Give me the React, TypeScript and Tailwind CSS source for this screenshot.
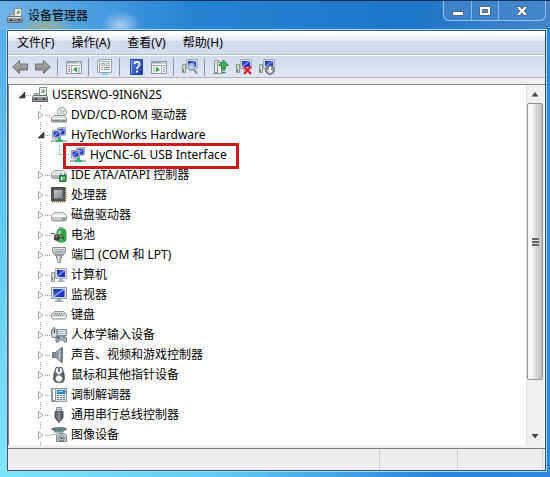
import React, { useState } from "react";

type IconProps = { className?: string };
type IconType = (props: IconProps) => React.ReactElement;

type TreeEntry = {
  id: string;
  label: string;
  icon: IconType;
  highlighted?: boolean;
  children?: TreeEntry[];
};

/* ============================== Icon base ============================== */
function Glyph({ className, children }: IconProps & { children: React.ReactNode }) {
  return (
    <svg viewBox="0 0 16 16" className={className ?? "size-4 shrink-0"} aria-hidden>
      {children}
    </svg>
  );
}

/** Shared gradients, mounted once */
function IconDefs() {
  return (
    <svg className="absolute size-0" aria-hidden>
      <defs>
        <linearGradient id="metal" x1="0" y1="0" x2="0" y2="1">
          <stop offset="0" stopColor="#f2f4f4" />
          <stop offset="1" stopColor="#9aa0a3" />
        </linearGradient>
        <linearGradient id="dark" x1="0" y1="0" x2="1" y2="0">
          <stop offset="0" stopColor="#4a4f53" />
          <stop offset="0.5" stopColor="#8b9297" />
          <stop offset="1" stopColor="#3c4043" />
        </linearGradient>
        <linearGradient id="screen" x1="0" y1="0" x2="1" y2="1">
          <stop offset="0" stopColor="#141f86" />
          <stop offset="0.4" stopColor="#3c55d6" />
          <stop offset="0.5" stopColor="#93a8f4" />
          <stop offset="0.6" stopColor="#2038cc" />
          <stop offset="1" stopColor="#1a2db4" />
        </linearGradient>
        <linearGradient id="arrow" x1="0" y1="0" x2="0" y2="1">
          <stop offset="0" stopColor="#b4b4b4" />
          <stop offset="1" stopColor="#808080" />
        </linearGradient>
        <linearGradient id="help" x1="0" y1="0" x2="1" y2="1">
          <stop offset="0" stopColor="#5d83e6" />
          <stop offset="1" stopColor="#1a3c9c" />
        </linearGradient>
        <linearGradient id="die" x1="0" y1="0" x2="1" y2="1">
          <stop offset="0" stopColor="#c6c8c9" />
          <stop offset="1" stopColor="#7e8183" />
        </linearGradient>
      </defs>
    </svg>
  );
}

/* ============================== Device icons ============================== */
const RootIcon: IconType = (p) => (
  <Glyph {...p}>
    <path d="M7.5.5h7v8h-7z" fill="#e9efe6" stroke="#848b8c" />
    <path d="M9.5 6l1.5-4 2 1.5L12 6z" fill="#6aa06b" />
    <path d="M2.500 6.500h5v3h-5z" fill="#c6cbcd" stroke="#8b9194" />
    <path d="M1.5 8.500h13l1 2v4H.5v-4z" fill="#8c979d" stroke="#626a6f" />
    <path d="M1.500 9.500h13" stroke="#dfe4e6" />
    <path d="M1 12.500h14" stroke="#6b757b" />
    <path d="M3 11h2v2H3zM11 11h2v2h-2z" fill="#3f474c" />
  </Glyph>
);

const DiscDriveIcon: IconType = (p) => (
  <Glyph {...p}>
    <circle cx="11" cy="5" r="4.5" fill="#e8eeea" stroke="#98a29c" />
    <path d="M11 5L8 1.5M11 5l3 3M11 5l3.5-2" stroke="#8db596" />
    <circle cx="11" cy="5" r="1.3" fill="#fff" stroke="#888" strokeWidth=".6" />
    <path d="M3 8.5h10l2.5 2.5v4H.5v-4z" fill="url(#metal)" stroke="#8a9093" />
    <path d="M1 11.5h14" stroke="#fafafa" />
    <path d="M11 13h3v1h-3z" fill="#489b4c" />
    <path d="M2 13.5h7" stroke="#7b8184" />
  </Glyph>
);

const NetworkIcon: IconType = (p) => (
  <Glyph {...p}>
    <path d="M6.500 1l8-.5v7.500l-8 .8z" fill="#d7dde6" stroke="#98a1af" />
    <path d="M7.500 2l6-.4v5.600l-6 .6z" fill="url(#screen)" />
    <path d="M1.500 3.500l8-.5v7.500l-8 .8z" fill="#e5e9ee" stroke="#98a1af" />
    <path d="M2.500 4.500l6-.4v5.400l-6 .6z" fill="url(#screen)" />
    <path d="M4 11.500h4v1H3z" fill="#8a939c" />
    <path d="M7 10.500h3v3H7z" fill="#36ad78" />
    <path d="M0 14h16" stroke="#9aaba6" strokeWidth="1.6" />
    <path d="M5 12.800h7v2.400H5z" fill="#35b07a" />
  </Glyph>
);

const IdeIcon: IconType = (p) => (
  <Glyph {...p}>
    <path d="M3.500 3.500h9l3 3v4l-1 1h-13l-1-1v-4z" fill="url(#metal)" stroke="#a0a5a8" />
    <path d="M1 7h14" stroke="#fbfbfb" />
    <path d="M8.500 8.500h6.500v6H8.500z" fill="#3d9b5d" stroke="#2b7846" />
    <path d="M10 8.500v-2M13.500 8.500v-2" stroke="#2b6b40" />
    <path d="M10 10h1.500v3H10zM12.500 10h1v2h-1z" fill="#c6efce" />
  </Glyph>
);

const CpuIcon: IconType = (p) => (
  <Glyph {...p}>
    <path d="M15 1v14M1 15h14" stroke="#c9b26a" strokeWidth="2" strokeDasharray="1 1" />
    <path d="M.5.5h13.500v13.500H.5z" fill="#55585a" stroke="#46494b" />
    <path d="M3 3h8.500v8.500H3z" fill="url(#die)" />
  </Glyph>
);

const DiskIcon: IconType = (p) => (
  <Glyph {...p}>
    <path d="M3.500 5.500h9l3 3v4.500l-1 1h-13l-1-1V8.500z" fill="url(#metal)" stroke="#a0a5a8" />
    <path d="M1 9h14" stroke="#fbfbfb" strokeWidth="2" />
    <path d="M2 12h8" stroke="#e3e5e6" />
    <path d="M12 10.500h2v2.500h-2z" fill="#58b34c" />
  </Glyph>
);

const BatteryIcon: IconType = (p) => (
  <Glyph {...p}>
    <path d="M8 .5h4v2H8z" fill="#c6ccc6" stroke="#808980" strokeWidth=".6" />
    <rect x="6" y="2" width="9" height="13" rx="3" fill="#3fb556" stroke="#3d8048" />
    <path d="M8.500 4v8" stroke="#b5ecbb" strokeWidth="2" />
    <path d="M12.500 4v9" stroke="#2d8e42" strokeWidth="1.500" />
    <path d="M0 6.500h2.500c2 0 1.500 2 3 2.500" fill="none" stroke="#555" strokeWidth="1.200" />
    <path d="M3 9l4-2 3 4-3.500 3L3 13z" fill="#45443c" />
    <path d="M8 8.500l3-1.500M10 11l3-1.500" stroke="#3b3931" strokeWidth="1.200" />
    <path d="M4.500 10l2.500-1" stroke="#bda965" />
  </Glyph>
);

const PortIcon: IconType = (p) => (
  <Glyph {...p}>
    <path d="M1.500.5h13v4l-2.500 4H4l-2.500-4z" fill="url(#metal)" stroke="#858c8f" />
    <path d="M3.500 2.500h9M4.500 4.500h7" stroke="#666d70" strokeDasharray="1 1" />
    <path d="M5.500 8.500h5v3l-1 1v3h-3v-3l-1-1z" fill="#aeb4b7" stroke="#858c8f" />
    <path d="M7.500 9v6" stroke="#f2f2f2" />
  </Glyph>
);

const ComputerIcon: IconType = (p) => (
  <Glyph {...p}>
    <path d="M.5 5.500h3v9h-3z" fill="#d7dbd6" stroke="#929a96" />
    <path d="M1.500 10v3" stroke="#589552" />
    <path d="M4.500 1.500h11v10h-11z" fill="#dbe0e8" stroke="#a4abb6" />
    <path d="M6 3h8v7H6z" fill="url(#screen)" />
    <path d="M8.500 12h3v1.500h2V15h-7v-1.500h2z" fill="#a5aeb8" />
  </Glyph>
);

const MonitorIcon: IconType = (p) => (
  <Glyph {...p}>
    <path d="M.5.5h15v11H.5z" fill="#d9dee6" stroke="#9299a4" />
    <path d="M2.500 2h11v8h-11z" fill="url(#screen)" />
    <path d="M6 12h4v1.500h2.500V15h-9v-1.500H6z" fill="#a3abb4" />
  </Glyph>
);

const KeyboardIcon: IconType = (p) => (
  <Glyph {...p}>
    <path d="M3.500 4.500h9l3 3.500v2.500L14 12H2L.5 10.500V8z" fill="#dadcdd" stroke="#94999c" />
    <path d="M4 6.500h8M3 8.500h10" stroke="#7c8184" strokeDasharray="1 1" />
    <path d="M2.500 7.500h11" stroke="#8d9295" strokeDasharray="1 1" />
    <path d="M1 10.500h14" stroke="#fafafa" />
  </Glyph>
);

const HidIcon: IconType = (p) => (
  <Glyph {...p}>
    <path d="M3 2.500V0" stroke="#555" />
    <rect x=".6" y="2" width="5.400" height="8.500" rx="2" fill="#d5d9da" stroke="#6d7376" />
    <path d="M3.300 3v3" stroke="#333" />
    <path d="M6.500 2.500h9v6h-9z" fill="#e3eaf0" stroke="#7b8c9b" />
    <path d="M7.500 4.500h7M7.500 6.500h7" stroke="#5a86a8" strokeDasharray="1 1" />
    <path d="M5 11l2-2h6.500l2 2v4h-2L12 13H9l-1.500 2H5z" fill="#aab4bc" stroke="#6d7881" />
    <path d="M7.500 10v2M6.500 11h2M12.500 10.500h1" stroke="#32393f" />
  </Glyph>
);

const SpeakerIcon: IconType = (p) => (
  <Glyph {...p}>
    <path d="M1.500 5.500h3v5h-3z" fill="#7f898f" stroke="#6a7379" />
    <path d="M4.500 5.500l6-5h1v15h-1l-6-5z" fill="#8d989f" stroke="#7d868b" />
    <path d="M8.500 3.500v9" stroke="#c2c9cd" strokeWidth="1.500" />
    <path d="M11 1v14" stroke="#626b70" />
  </Glyph>
);

const MouseIcon: IconType = (p) => (
  <Glyph {...p}>
    <path d="M5 .5h6l2 6 .5 6-2 3h-7l-2-3 .5-6z" fill="url(#dark)" stroke="#63696c" />
    <path d="M5.500 1h5l1 4L8 7.500 4.500 5z" fill="#eceeef" />
    <path d="M4.500 11.500C5 7.500 11 7.500 11.500 11.500l-1.500 3H6z" fill="#f3f4f4" />
    <path d="M8 1v4" stroke="#444" strokeWidth="1.300" />
  </Glyph>
);

const ModemIcon: IconType = (p) => (
  <Glyph {...p}>
    <path d="M.5 1.500h15v13H.5z" fill="#dde4e8" stroke="#8a959c" />
    <path d="M1.500 1.500h3v12h-3z" fill="#f4f6f7" stroke="#8a959c" />
    <path d="M6 3h8.500v4H6z" fill="#2b86bd" />
    <path d="M7 4.500h5" stroke="#9fd3ef" />
    <path d="M6 8.500h9M6 10.500h9M6 12.500h9" stroke="#6b808c" strokeDasharray="2 1" />
  </Glyph>
);

const UsbIcon: IconType = (p) => (
  <Glyph {...p}>
    <path d="M5.500.5h5v4h-5z" fill="#d3d7d9" stroke="#8b9195" />
    <path d="M6.500 2h1v1h-1zM8.500 2h1v1h-1z" fill="#666" />
    <path d="M4 4.500h8v6l-2 3H6l-2-3z" fill="url(#dark)" stroke="#53585b" />
    <path d="M7 13.500h2V16H7z" fill="#6d7376" />
  </Glyph>
);

const CameraIcon: IconType = (p) => (
  <Glyph {...p}>
    <path d="M0 2l4-1.500h9L16 2l-4 2.500H4z" fill="#667d80" stroke="#586c70" strokeWidth=".6" />
    <path d="M2 5h11l-2 1.500H5z" fill="#b4c0c2" />
    <path d="M5.500 8.500l2-2h6l2 2v6h-10z" fill="#c9cfd2" stroke="#7d8588" />
    <path d="M.5 7.500h6" stroke="#a9b1b3" />
    <circle cx="10.500" cy="11.300" r="2.700" fill="#f2f4f5" stroke="#566" />
    <circle cx="10.500" cy="11.300" r="1.200" fill="#33465a" />
  </Glyph>
);

/* ============================== Toolbar icons ============================== */
const BackIcon: IconType = (p) => (
  <Glyph {...p}>
    <path d="M.7 8L7.500 1.500v3.500h8v6h-8v3.500z" fill="url(#arrow)" stroke="#6c6c6c" strokeLinejoin="round" />
  </Glyph>
);

const ForwardIcon: IconType = (p) => (
  <Glyph {...p}>
    <path d="M15.300 8L8.500 1.500v3.500h-8v6h8v3.500z" fill="url(#arrow)" stroke="#6c6c6c" strokeLinejoin="round" />
  </Glyph>
);

const ConsoleTreeIcon: IconType = (p) => (
  <Glyph {...p}>
    <path d="M.5 2.500h15v12H.5z" fill="#f6f8fa" stroke="#8e959d" />
    <path d="M1 3.500h14" stroke="#99a5b3" strokeWidth="2" />
    <path d="M11 3.500h3" stroke="#fff" strokeDasharray="1 1" />
    <path d="M1 6.500h14M5.500 6.500v8" stroke="#a8b0b8" />
    <path d="M2 8.500h2M2 10.500h2M2 12.500h2M13 8v6" stroke="#8d98a3" />
    <path d="M10.800 7.700v5.600L7 10.500z" fill="#35a13d" />
  </Glyph>
);

const PropertiesIcon: IconType = (p) => (
  <Glyph {...p}>
    <path d="M.5 1.500h12v12H.5z" fill="#f2f5f8" stroke="#a6adb4" />
    <path d="M2.500.5h12v13h-12z" fill="#f8fafb" stroke="#9ba2a9" />
    <path d="M4 2.500h9" stroke="#9eabb8" />
    <path d="M4.500 4.500h3v2h-3zM9.500 4.500h3v2h-3z" fill="#fff" stroke="#9aa2a9" />
    <path d="M4 8.500h2M7 8.500h6M4 10.500h2M7 10.500h6" stroke="#8b959f" />
    <path d="M5 14h6v2H5z" fill="#83d2e4" />
  </Glyph>
);

const HelpIcon: IconType = (p) => (
  <Glyph {...p}>
    <path d="M2.500.5h12v15h-12z" fill="url(#help)" stroke="#27469a" />
    <path d="M3.500 1v14" stroke="#8ca7ee" />
    <path d="M6.500 5c.3-3 5-2.500 5 .2C11.500 7.300 9 7.300 9 10" fill="none" stroke="#fff" strokeWidth="1.700" />
    <path d="M8 11.500h2v2H8z" fill="#fff" />
  </Glyph>
);

const ActionPaneIcon: IconType = (p) => (
  <Glyph {...p}>
    <path d="M.5 2.500h15v12H.5z" fill="#f6f8fa" stroke="#8e959d" />
    <path d="M1 3.500h14" stroke="#99a5b3" strokeWidth="2" />
    <path d="M11 3.500h3" stroke="#fff" strokeDasharray="1 1" />
    <path d="M1 6.500h14M10.500 6.500v8M3 7v7" stroke="#a8b0b8" />
    <path d="M12 8.500h2M12 10.500h2M12 12.500h2" stroke="#8d98a3" />
    <path d="M5 7.700v5.600l3.800-2.800z" fill="#35a13d" />
  </Glyph>
);

function SmallComputer() {
  return (
    <>
      <path d="M.5 5.500h3v8h-3z" fill="#d8ddd8" stroke="#8b938e" />
      <path d="M1.500 10v3" stroke="#579260" />
      <path d="M4.500.5h11v9h-11z" fill="#d9dfe9" stroke="#a3abb9" />
      <path d="M6 2h8v6H6z" fill="url(#screen)" />
      <path d="M7 10h4v2H7z" fill="#a5adb8" />
    </>
  );
}

const ScanIcon: IconType = (p) => (
  <Glyph {...p}>
    <SmallComputer />
    <circle cx="9.500" cy="7.500" r="3.300" fill="#bed6f4" fillOpacity=".85" stroke="#8d9cb4" />
    <path d="M12 10.500l3 4" stroke="#858b94" strokeWidth="2" />
  </Glyph>
);

const UpdateIcon: IconType = (p) => (
  <Glyph {...p}>
    <path d="M1.500 1.500h4v12h-4z" fill="#e4eae6" stroke="#8b948f" />
    <path d="M4.500 3.500h4v11h-4z" fill="#eef2ef" stroke="#8b948f" />
    <path d="M0 14.500h9" stroke="#8b948f" />
    <path d="M10.500 1l5 5.500h-3v3h-4v-3h-3z" fill="#43ad5c" stroke="#237b38" strokeWidth=".8" />
    <path d="M8.500 11h4M8.500 13.500h4" stroke="#358e4c" strokeWidth="1.300" />
  </Glyph>
);

const UninstallIcon: IconType = (p) => (
  <Glyph {...p}>
    <SmallComputer />
    <path d="M8 7.500l7 7.500M15 7.500L8 15" stroke="#d3222a" strokeWidth="2.200" />
  </Glyph>
);

const DisableIcon: IconType = (p) => (
  <Glyph {...p}>
    <SmallComputer />
    <circle cx="11" cy="11" r="4.500" fill="#8b8f92" stroke="#777b7e" />
    <path d="M10 8h2v3h2l-3 3.500L8 11h2z" fill="#fff" />
  </Glyph>
);

/* ============================== Data ============================== */
const menus = ["文件(F)", "操作(A)", "查看(V)", "帮助(H)"];

const toolbarGroups: { label: string; icon: IconType }[][] = [
  [
    { label: "后退", icon: BackIcon },
    { label: "前进", icon: ForwardIcon },
  ],
  [{ label: "显示/隐藏控制台树", icon: ConsoleTreeIcon }],
  [{ label: "属性", icon: PropertiesIcon }],
  [
    { label: "帮助", icon: HelpIcon },
    { label: "显示/隐藏操作窗格", icon: ActionPaneIcon },
  ],
  [{ label: "扫描检测硬件改动", icon: ScanIcon }],
  [
    { label: "更新驱动程序", icon: UpdateIcon },
    { label: "卸载", icon: UninstallIcon },
    { label: "禁用", icon: DisableIcon },
  ],
];

const categories: TreeEntry[] = [
  { id: "dvd", label: "DVD/CD-ROM 驱动器", icon: DiscDriveIcon },
  {
    id: "hytech",
    label: "HyTechWorks Hardware",
    icon: NetworkIcon,
    children: [{ id: "hycnc", label: "HyCNC-6L USB Interface", icon: NetworkIcon, highlighted: true }],
  },
  { id: "ide", label: "IDE ATA/ATAPI 控制器", icon: IdeIcon },
  { id: "cpu", label: "处理器", icon: CpuIcon },
  { id: "disk", label: "磁盘驱动器", icon: DiskIcon },
  { id: "battery", label: "电池", icon: BatteryIcon },
  { id: "ports", label: "端口 (COM 和 LPT)", icon: PortIcon },
  { id: "computer", label: "计算机", icon: ComputerIcon },
  { id: "monitor", label: "监视器", icon: MonitorIcon },
  { id: "keyboard", label: "键盘", icon: KeyboardIcon },
  { id: "hid", label: "人体学输入设备", icon: HidIcon },
  { id: "sound", label: "声音、视频和游戏控制器", icon: SpeakerIcon },
  { id: "mouse", label: "鼠标和其他指针设备", icon: MouseIcon },
  { id: "modem", label: "调制解调器", icon: ModemIcon },
  { id: "usb", label: "通用串行总线控制器", icon: UsbIcon },
  { id: "imaging", label: "图像设备", icon: CameraIcon },
];

/* ============================== Tree ============================== */
function Expander({ open, label, onClick }: { open: boolean; label: string; onClick: () => void }) {
  return (
    <button
      type="button"
      aria-label={label}
      aria-expanded={open}
      onClick={onClick}
      className="grid h-3 w-[9px] shrink-0 place-items-center bg-white"
    >
      <svg viewBox="0 0 8 10" className="h-[10px] w-2" aria-hidden>
        {open ? (
          <path d="M7 2v6H1z" fill="#404040" stroke="#262626" strokeWidth=".6" />
        ) : (
          <path d="M1.500 1.500L6 5 1.500 8.500z" fill="#fff" stroke="#a6a6a6" />
        )}
      </svg>
    </button>
  );
}

function Category({ entry }: { entry: TreeEntry }) {
  const [open, setOpen] = useState(true);
  const isOpen = !!entry.children && open;
  const Icon = entry.icon;

  return (
    <li role="treeitem">
      <div className="flex h-5 items-center">
        <Expander open={isOpen} label={entry.label} onClick={() => setOpen((o) => !o)} />
        <span className="mr-px w-[5px] border-t border-dotted border-[#9a9a9a]" />
        <Icon />
        <span className="ml-1 whitespace-nowrap">{entry.label}</span>
      </div>
      {isOpen && (
        <ul role="group" className="pl-[23px]">
          {entry.children!.map((child) => (
            <li key={child.id} role="treeitem" className="relative flex h-5 w-fit items-center">
              <span className="mr-px h-[10px] w-[10px] self-start border-b border-l border-dotted border-[#9a9a9a]" />
              <child.icon />
              <span className="ml-1 whitespace-nowrap">{child.label}</span>
              {child.highlighted && (
                <span className="pointer-events-none absolute -top-[2px] -right-3 -bottom-1 left-1 border-3 border-[#cc1a1f]" />
              )}
            </li>
          ))}
        </ul>
      )}
    </li>
  );
}

function DeviceTree() {
  const [open, setOpen] = useState(true);

  return (
    <ul role="tree" aria-label="设备" className="min-w-0 flex-1 overflow-hidden bg-white pl-2">
      <li role="treeitem">
        <div className="flex h-5 items-center">
          <Expander open={open} label="USERSWO-9IN6N2S" onClick={() => setOpen((o) => !o)} />
          <span className="mr-px w-[5px] border-t border-dotted border-[#9a9a9a]" />
          <RootIcon />
          <span className="ml-1 whitespace-nowrap">USERSWO-9IN6N2S</span>
        </div>
        {open && (
          <div className="grid pl-[19px]">
            {/* vertical guide, behind the expanders */}
            <span className="col-start-1 row-start-1 ml-1 w-0 border-l border-dotted border-[#9a9a9a]" />
            <ul role="group" className="relative col-start-1 row-start-1">
              {categories.map((entry) => (
                <Category key={entry.id} entry={entry} />
              ))}
            </ul>
          </div>
        )}
      </li>
    </ul>
  );
}

function Scrollbar() {
  return (
    <div className="flex w-[17px] shrink-0 flex-col border-l border-[#e3e3e3] bg-[#f0f0f0]">
      <button type="button" aria-label="向上滚动" className="grid h-[18px] place-items-center">
        <svg viewBox="0 0 8 5" className="h-[5px] w-2" aria-hidden>
          <path d="M4 0l3.500 4.500h-7z" fill="#454545" />
        </svg>
      </button>
      <div className="flex flex-1 flex-col">
        <div className="grid flex-[278] place-items-center rounded-xs border border-[#929292] bg-linear-to-r from-[#f6f6f6] from-30% via-[#d6d6d8] via-60% to-[#bfc0c4]">
          <div className="flex flex-col gap-px">
            <span className="h-[2px] w-[7px] bg-[#666]" />
            <span className="h-[2px] w-[7px] bg-[#666]" />
            <span className="h-[2px] w-[7px] bg-[#666]" />
          </div>
        </div>
        <div className="flex-[47]" />
      </div>
      <button type="button" aria-label="向下滚动" className="grid h-[18px] place-items-center">
        <svg viewBox="0 0 8 5" className="h-[5px] w-2" aria-hidden>
          <path d="M4 4.500L7.500 0h-7z" fill="#454545" />
        </svg>
      </button>
    </div>
  );
}

/* ============================== Window chrome ============================== */
function TitleBar() {
  return (
    <header className="flex h-7 items-start justify-between bg-[radial-gradient(ellipse_28px_14px_at_46px_28px,#9db48f,transparent),radial-gradient(ellipse_20px_14px_at_121px_24px,#a9cdf2,transparent),linear-gradient(to_right,#6fb4e6,#2683d4_35%,#1f75c9_75%,#4483c8)] pr-1 pl-[7px]">
      <div className="flex h-full items-center gap-[5px] pt-[2px]">
        <RootIcon />
        <h1>设备管理器</h1>
      </div>
      <div className="flex h-5 divide-x divide-[#8db9e6] rounded-b-md border border-t-0 border-[#9cc3ea] bg-[#4586c9]/70">
        <button type="button" aria-label="最小化" className="grid w-7 place-items-center">
          <svg viewBox="0 0 12 12" className="size-3" aria-hidden>
            <path d="M.5 6.500h11v4H.5z" fill="#fff" stroke="#4d6685" />
          </svg>
        </button>
        <button type="button" aria-label="最大化" className="grid w-[27px] place-items-center">
          <svg viewBox="0 0 12 10" className="h-[10px] w-3" aria-hidden>
            <path d="M.5.5h11v9H.5z" fill="#fff" stroke="#4d6685" />
            <path d="M3.500 3.500h5v3h-5z" fill="#5b8fc8" stroke="#4d6685" />
          </svg>
        </button>
        <button type="button" aria-label="关闭" className="grid w-[46px] place-items-center">
          <svg viewBox="0 0 12 10" className="h-[10px] w-3" aria-hidden>
            <path
              d="M1 .5h3L6 3 8 .5h3v1L8.300 5 11 8.500v1H8L6 7 4 9.500H1v-1L3.700 5 1 1.500z"
              fill="#fff"
              stroke="#4d6685"
            />
          </svg>
        </button>
      </div>
    </header>
  );
}

function MenuBar() {
  return (
    <nav className="flex h-6 items-center gap-[17px] border-b border-[#b3b9c9] bg-linear-to-b from-white from-10% via-[#e3e8f3] via-40% to-[#d3daec] to-45% pl-[9px]">
      {menus.map((m) => (
        <button key={m} type="button" className="whitespace-nowrap">
          {m}
        </button>
      ))}
    </nav>
  );
}

function Toolbar() {
  return (
    <div
      role="toolbar"
      aria-label="工具栏"
      className="flex h-[23px] items-center divide-x divide-[#8b93a3] border-t border-b border-t-white border-b-[#b0b5c0] bg-linear-to-b from-[#d3daec] to-[#e1e7f5] pl-1"
    >
      {toolbarGroups.map((group, i) => (
        <div key={i} className="flex h-[18px] items-center gap-[7px] pr-[6px] pl-2 first:pl-0">
          {group.map(({ label, icon: Icon }) => (
            <button key={label} type="button" title={label} aria-label={label}>
              <Icon />
            </button>
          ))}
        </div>
      ))}
    </div>
  );
}

function StatusBar() {
  return (
    <footer className="flex h-[22px] border-t border-[#7d7d7d] bg-[#f0eded] py-px pr-[2px]">
      <span className="flex-1 border-r border-[#cfcccc]" />
      <span className="w-[78px] border-r border-[#cfcccc]" />
      <span className="w-[85px] border-r border-[#cfcccc]" />
    </footer>
  );
}

export default function App() {
  return (
    <div className="flex min-h-screen flex-col border-t border-[#12315c] font-['Noto_Sans','Noto_Sans_CJK_SC',sans-serif] text-xs text-black">
      <IconDefs />
      <TitleBar />
      <div className="flex flex-1 flex-col bg-[radial-gradient(ellipse_80%_110%_at_0%_100%,#7ce6f8,#5fcdf3_50%,transparent),linear-gradient(to_right,#55a5e2,#2a7fd0_50%,#2c88de)] pr-[3px] pb-[5px] pl-[6px]">
        <main className="flex flex-1 flex-col border border-[#a9dcf4]">
          <div className="flex flex-1 flex-col border border-[#2d5675] bg-[#f0f0f0]">
            <MenuBar />
            <Toolbar />
            <section className="mt-[6px] mb-[3px] flex flex-1 border-t border-l border-[#8a8a8a] pr-[2px]">
              <DeviceTree />
              <Scrollbar />
            </section>
            <StatusBar />
          </div>
        </main>
      </div>
    </div>
  );
}
